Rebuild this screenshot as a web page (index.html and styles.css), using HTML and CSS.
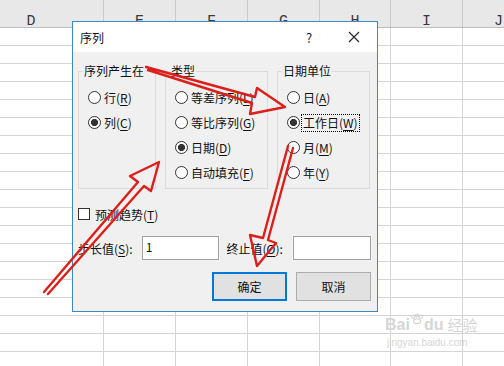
FILE: index.html
```html
<html>
<head>
    <meta charset="UTF-8" />
    <meta name="viewport" content="width=device-width, initial-scale=1.0" />
    <title>序列</title>
    <link rel="stylesheet" href="styles.css">
</head>
<body>
    <div class="sheet">
        <div class="col-heads">
            <div class="ch wide">D</div>
            <div class="ch">E</div>
            <div class="ch">F</div>
            <div class="ch">G</div>
            <div class="ch narrow">H</div>
            <div class="ch">I</div>
            <div class="ch">J</div>
        </div>
        <div class="grid">
            <div class="gc wide"></div>
            <div class="gc"></div>
            <div class="gc"></div>
            <div class="gc"></div>
            <div class="gc narrow"></div>
            <div class="gc"></div>
            <div class="gc"></div>
        </div>

        <div class="dialog">
            <div class="titlebar">
                <span class="title">序列</span>
                <span class="help">?</span>
                <span class="close">
                    <svg width="12" height="12" viewBox="0 0 12 12">
                        <path d="M1 1 L11 11 M11 1 L1 11" stroke="#222" stroke-width="1.1" fill="none" />
                    </svg>
                </span>
            </div>
            <div class="body">
                <div class="groups">
                    <fieldset class="group g1">
                        <legend>序列产生在</legend>
                        <div class="opts">
                            <div class="opt"><span class="radio"></span><span>行(<u>R</u>)</span></div>
                            <div class="opt"><span class="radio on"></span><span>列(<u>C</u>)</span></div>
                        </div>
                    </fieldset>
                    <fieldset class="group g2">
                        <legend>类型</legend>
                        <div class="opts">
                            <div class="opt"><span class="radio"></span><span>等差序列(<u>L</u>)</span></div>
                            <div class="opt"><span class="radio"></span><span>等比序列(<u>G</u>)</span></div>
                            <div class="opt"><span class="radio on"></span><span>日期(<u>D</u>)</span></div>
                            <div class="opt"><span class="radio"></span><span>自动填充(<u>F</u>)</span></div>
                        </div>
                    </fieldset>
                    <fieldset class="group g3">
                        <legend>日期单位</legend>
                        <div class="opts">
                            <div class="opt"><span class="radio"></span><span>日(<u>A</u>)</span></div>
                            <div class="opt"><span class="radio on"></span><span class="focus">工作日(<u>W</u>)</span></div>
                            <div class="opt"><span class="radio"></span><span>月(<u>M</u>)</span></div>
                            <div class="opt"><span class="radio"></span><span>年(<u>Y</u>)</span></div>
                        </div>
                    </fieldset>
                </div>

                <div class="check-row">
                    <span class="checkbox"></span><span>预测趋势(<u>T</u>)</span>
                </div>

                <div class="field-row">
                    <span class="lbl lbl1">步长值(<u>S</u>):</span>
                    <span class="input in1">1</span>
                    <span class="lbl lbl2">终止值(<u>O</u>):</span>
                    <span class="input in2"></span>
                </div>

                <div class="btn-row">
                    <button class="btn primary">确定</button>
                    <button class="btn">取消</button>
                </div>
            </div>
        </div>

        <!-- red hand-drawn arrows over the dialog -->
        <svg class="arrows" width="504" height="366" viewBox="0 0 504 366">
            <g fill="none" stroke="#dc1f1a" stroke-width="2.4" stroke-linejoin="round" stroke-linecap="round">
                <path d="M146 67 L255 97 L257 88 L285 107 L250 114 L252 103 L148 70" />
                <path d="M44 292 L138 182 L130 176 L159 162 L151 191 L144 186 L48 294" />
                <path d="M288 146 L263 238 L250 235 L257 266 L276 243 L268 240 L293 148" />
            </g>
        </svg>

        <div class="watermark">
            <div class="wm-logo">Bai<span class="paw">
                <svg width="14" height="12" viewBox="0 0 18 14">
                    <g fill="none" stroke="#cfcfcf" stroke-width="1.3">
                        <circle cx="4" cy="4" r="2" />
                        <circle cx="9" cy="2.5" r="2" />
                        <circle cx="14" cy="4" r="2" />
                        <ellipse cx="9" cy="10" rx="4.5" ry="3.2" />
                    </g>
                </svg>
            </span>du<span class="wm-cn">经验</span></div>
            <div class="wm-url">jingyan.baidu.com</div>
        </div>
    </div>
</body>
</html>
```

FILE: styles.css
```css
body {
    margin: 0;
    font-family: "Noto Sans CJK SC", "Noto Sans", sans-serif;
    font-size: 12px;
    color: #111;
}
.sheet {
    position: relative;
    width: 504px;
    height: 366px;
    overflow: hidden;
    background: #fff;
}

/* spreadsheet header and grid */
.col-heads {
    display: flex;
    margin-left: -41px;
    height: 28px;
    background: #e8e8e8;
    border-bottom: 1px solid #bdbdbd;
    box-sizing: border-box;
}
.ch {
    flex: none;
    width: 72px;
    box-sizing: border-box;
    border-right: 1px solid #c9c9c9;
    text-align: center;
    font-family: "Liberation Mono", monospace;
    font-size: 15px;
    line-height: 10px;
    padding-top: 17px;
    color: #3a3a3a;
}
.grid {
    display: flex;
    margin-left: -41px;
    height: 338px;
}
.gc {
    flex: none;
    width: 72px;
    box-sizing: border-box;
    border-right: 1px solid #d4d4d4;
    background: repeating-linear-gradient(to bottom, transparent 0 17px, #d4d4d4 17px 18px);
}
.wide {
    width: 145px;
}
.narrow {
    width: 71px;
}

/* dialog */
.dialog {
    position: absolute;
    left: 72px;
    top: 21px;
    width: 306px;
    height: 291px;
    box-sizing: border-box;
    border: 1px solid #3a8ac5;
    background: #f0f0f0;
    display: flex;
    flex-direction: column;
}
.titlebar {
    height: 30px;
    background: #fff;
    display: flex;
    align-items: center;
}
.title {
    padding-left: 7px;
}
.help {
    margin-left: auto;
    width: 24px;
    margin-right: 10px;
    text-align: center;
    font-size: 13px;
    color: #222;
}
.close {
    width: 46px;
    display: flex;
    justify-content: center;
}
.body {
    padding: 11px 6px 0 5px;
}
.groups {
    display: flex;
    gap: 9px;
}
.group {
    margin: 0;
    padding: 0 0 3px 0;
    min-width: 0;
    border: 1px solid #dcdcdc;
    box-sizing: border-box;
}
.group legend {
    margin-left: 4px;
    padding: 0 1px;
    line-height: 16px;
}
.g1 {
    width: 78px;
}
.g2 {
    width: 103px;
}
.g3 {
    width: 93px;
}
.opts {
    padding-top: 6px;
}
.opt {
    height: 25px;
    display: flex;
    align-items: center;
    padding-left: 9px;
    gap: 3px;
    white-space: nowrap;
}
.radio {
    width: 13px;
    height: 13px;
    box-sizing: border-box;
    border: 1px solid #333;
    border-radius: 50%;
    background: #fff;
}
.radio.on {
    background: radial-gradient(circle, #333 0 3.2px, #fff 3.9px);
}
.focus {
    outline: 1px dotted #000;
    outline-offset: 1px;
    line-height: 14px;
}
u {
    text-underline-offset: 2px;
}

.check-row {
    margin-top: 17px;
    height: 16px;
    display: flex;
    align-items: center;
    gap: 5px;
}
.checkbox {
    width: 12px;
    height: 12px;
    box-sizing: border-box;
    border: 1px solid #333;
    background: #fff;
}

.field-row {
    margin-top: 14px;
    height: 24px;
    display: flex;
    align-items: center;
}
.lbl {
    white-space: nowrap;
}
.lbl1 {
    width: 64px;
}
.lbl2 {
    width: 67px;
    margin-left: 8px;
}
.input {
    height: 24px;
    box-sizing: border-box;
    border: 1px solid #a3a3a3;
    background: #fff;
    padding-left: 3px;
    line-height: 20px;
}
.in1 {
    width: 77px;
}
.in2 {
    width: 78px;
}

.btn-row {
    margin-top: 12px;
    display: flex;
    justify-content: flex-end;
    gap: 9px;
}
.btn {
    width: 75px;
    height: 29px;
    box-sizing: border-box;
    border: 1px solid #adadad;
    background: #e1e1e1;
    font-family: inherit;
    font-size: 12px;
    color: #111;
    padding: 0;
}
.btn.primary {
    border: 2px solid #0078d7;
}

/* overlays */
.arrows {
    position: absolute;
    left: 0;
    top: 0;
    pointer-events: none;
}
.watermark {
    position: absolute;
    left: 385px;
    top: 313px;
    color: #d6d6d6;
    font-family: "Liberation Sans", sans-serif;
}
.wm-logo {
    font-size: 16px;
    font-weight: bold;
    line-height: 22px;
    display: flex;
    align-items: flex-end;
}
.paw {
    display: inline-flex;
    margin-bottom: 11px;
}
.wm-cn {
    font-family: "Noto Sans CJK SC", sans-serif;
    font-size: 15px;
    font-weight: normal;
    margin-left: 4px;
}
.wm-url {
    font-size: 10px;
    line-height: 14px;
    padding-left: 2px;
}
```
